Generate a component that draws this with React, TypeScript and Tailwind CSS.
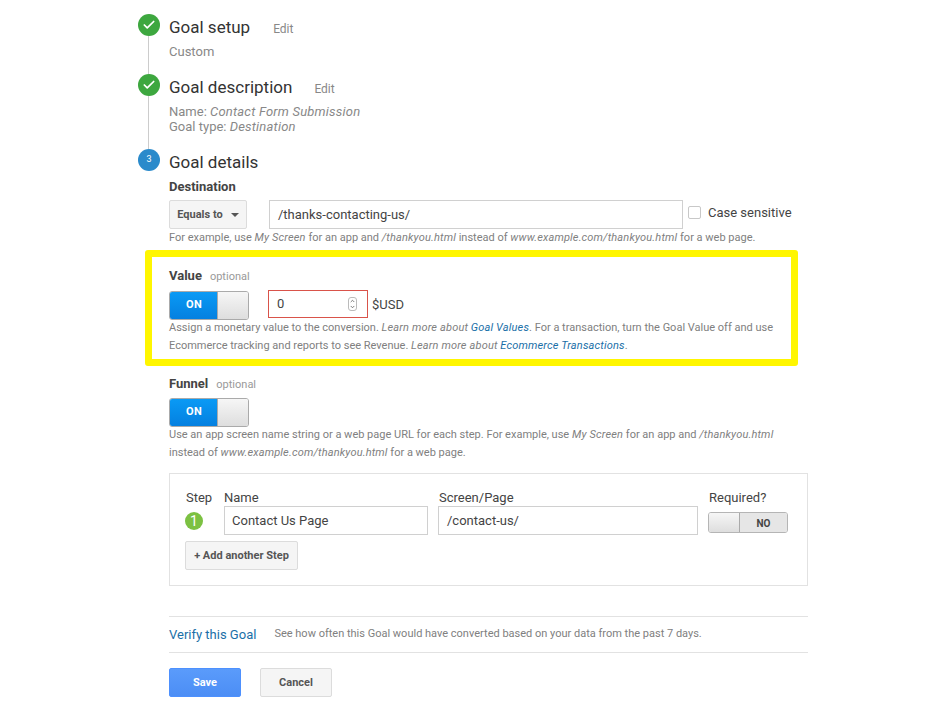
import { ChevronDown, ChevronUp, Check } from "lucide-react";

function StepMarker({ done, label, line }: { done?: boolean; label?: string; line: string }) {
  return (
    <div className="flex w-[31px] shrink-0 flex-col items-start">
      <div
        className={
          done
            ? "flex h-[22px] w-[22px] items-center justify-center rounded-full bg-[#3da73f] text-white"
            : "flex h-[22px] w-[22px] items-center justify-center rounded-full bg-[#2a8acb] text-[9px] text-white"
        }
      >
        {done ? <Check size={14} strokeWidth={3} /> : label}
      </div>
      {line !== "" && <div className={"ml-[10px] w-px bg-[#cccccc] " + line} />}
    </div>
  );
}

function Toggle() {
  return (
    <div className="flex h-[29px] w-[80px] overflow-hidden rounded-[3px] border border-[#aaaaaa]">
      <div className="flex w-[47px] items-center justify-center bg-gradient-to-b from-[#0a9af5] to-[#0580e0] pl-px text-[11px] font-bold tracking-wide text-white">
        ON
      </div>
      <div className="flex-1 border-l border-[#aaaaaa] bg-gradient-to-b from-[#f6f6f6] to-[#dedede]" />
    </div>
  );
}

function Help({ children, className = "" }: { children: React.ReactNode; className?: string }) {
  return <p className={"text-[11px] text-[#808080] " + className}>{children}</p>;
}

function Em({ children }: { children: React.ReactNode }) {
  return <i className="tracking-[0.16px]">{children}</i>;
}

function Heading({ title, optional }: { title: string; optional?: boolean }) {
  return (
    <div className="flex items-baseline gap-[8px] leading-[16px]">
      <span className="text-[13px] font-bold text-[#444444]">{title}</span>
      {optional && <span className="text-[11px] text-[#999999]">optional</span>}
    </div>
  );
}

const link = "italic tracking-[0.16px] text-[#1a6fa8]";

export default function App() {
  return (
    <div
      className="h-[706px] w-[950px] overflow-hidden bg-white pl-[138px] pt-[14px] text-[#333333]"
      style={{ fontFamily: "Roboto, sans-serif" }}
    >
      {/* step 1 */}
      <div className="flex h-[60px]">
        <StepMarker done line="h-[38px]" />
        <div>
          <div className="flex items-baseline">
            <span className="text-[17px] leading-[27px] text-[#333333]">Goal setup</span>
            <span className="ml-[23px] text-[12px] text-[#888888]">Edit</span>
          </div>
          <p className="mt-[3px] text-[13px] leading-[16px] text-[#888888]">Custom</p>
        </div>
      </div>

      {/* step 2 */}
      <div className="flex h-[75px]">
        <StepMarker done line="h-[53px]" />
        <div>
          <div className="flex items-baseline">
            <span className="text-[17px] leading-[27px] text-[#333333]">Goal description</span>
            <span className="ml-[22px] text-[12px] text-[#888888]">Edit</span>
          </div>
          <p className="mt-[3px] text-[13px] leading-[15px] text-[#888888]">
            Name: <i className="tracking-[0.2px]">Contact Form Submission</i>
          </p>
          <p className="text-[13px] leading-[15px] text-[#888888]">
            Goal type: <i className="tracking-[0.2px]">Destination</i>
          </p>
        </div>
      </div>

      {/* step 3 */}
      <div className="flex">
        <StepMarker label="3" line="" />
        <div className="w-[639px] shrink-0">
          <div className="text-[17px] leading-[27px] text-[#333333]">Goal details</div>

          <div className="mt-[3px]">
            <Heading title="Destination" />
          </div>
          <div className="mt-[5px] flex items-center">
            <div className="flex h-[29px] w-[78px] items-center justify-center gap-[8px] rounded-[2px] border border-[#dcdcdc] bg-[#f5f5f5] pt-px text-[11px] font-bold text-[#555555]">
              Equals to
              <span className="h-0 w-0 border-x-[4px] border-t-[4px] border-x-transparent border-t-[#555555]" />
            </div>
            <div className="ml-[22px] flex h-[29px] w-[414px] items-center border border-[#d0d0d0] pl-[8px] text-[13px] text-[#444444]">
              /thanks-contacting-us/
            </div>
            <div className="mb-[4px] ml-[5px] h-[13px] w-[13px] rounded-[2px] border border-[#c8c8c8]" />
            <span className="mb-[4px] ml-[7px] text-[13px] text-[#444444]">Case sensitive</span>
          </div>
          <Help className="mt-[1px] leading-[16px]">
            For example, use <Em>My Screen</Em> for an app and <Em>/thankyou.html</Em> instead of{" "}
            <Em>www.example.com/thankyou.html</Em> for a web page.
          </Help>

          {/* highlighted value section */}
          <div className="-ml-[24px] mt-[4px] h-[116px] w-[653px] rounded-[3px] border-[7px] border-[#fff600] pl-[17px] pt-[11px]">
            <Heading title="Value" optional />
            <div className="mt-[5px] flex items-center">
              <Toggle />
              <div className="mb-[2px] ml-[19px] flex h-[28px] w-[100px] items-center justify-between border border-[#d9534a] pl-[8px] pr-[10px] text-[13px] text-[#444444]">
                0
                <div className="flex h-[14px] w-[9px] flex-col items-center justify-center rounded-[3px] border border-[#bbbbbb] text-[#555555]">
                  <ChevronUp size={7} strokeWidth={3} />
                  <ChevronDown size={7} strokeWidth={3} />
                </div>
              </div>
              <span className="ml-[4px] text-[13px] text-[#444444]">$USD</span>
            </div>
            <Help className="-mt-px leading-[18px]">
              Assign a monetary value to the conversion. <Em>Learn more about</Em>{" "}
              <span className={link}>Goal Values</span>. For a transaction, turn the Goal Value off and use
              <br />
              Ecommerce tracking and reports to see Revenue. <Em>Learn more about</Em>{" "}
              <span className={link}>Ecommerce Transactions</span>.
            </Help>
          </div>

          {/* funnel */}
          <div className="mt-[10px]">
            <Heading title="Funnel" optional />
          </div>
          <div className="mt-[5px]">
            <Toggle />
          </div>
          <Help className="-mt-px leading-[18px]">
            Use an app screen name string or a web page URL for each step. For example, use <Em>My Screen</Em> for an
            app and <Em>/thankyou.html</Em>
            <br />
            instead of <Em>www.example.com/thankyou.html</Em> for a web page.
          </Help>

          <div className="mt-[11px] h-[113px] w-[639px] border border-[#e2e2e2] pl-[15px] pt-[14px]">
            <div className="flex">
              <div className="w-[39px]">
                <div className="pl-px pt-px text-[13px] leading-[17px] text-[#444444]">Step</div>
                <div className="mt-[6px] flex h-[18px] w-[18px] items-center justify-center rounded-full bg-[#7cc142] text-[14px] text-white">
                  1
                </div>
              </div>
              <div className="w-[204px]">
                <div className="pt-px text-[13px] leading-[17px] text-[#444444]">Name</div>
                <div className="flex h-[29px] items-center border border-[#d0d0d0] pl-[7px] text-[13px] text-[#444444]">
                  Contact Us Page
                </div>
              </div>
              <div className="ml-[10px] w-[260px]">
                <div className="pl-px pt-px text-[13px] leading-[17px] text-[#444444]">Screen/Page</div>
                <div className="flex h-[29px] items-center border border-[#d0d0d0] pl-[8px] text-[13px] text-[#444444]">
                  /contact-us/
                </div>
              </div>
              <div className="ml-[10px]">
                <div className="pl-px pt-px text-[13px] leading-[17px] text-[#444444]">Required?</div>
                <div className="mt-[6px] flex h-[21px] w-[80px] overflow-hidden rounded-[3px] border border-[#b5b5b5]">
                  <div className="w-[31px] border-r border-[#aaaaaa] bg-gradient-to-b from-[#f6f6f6] to-[#dedede]" />
                  <div className="flex flex-1 items-center justify-center bg-[#e6e6e6] pt-px text-[10px] font-bold text-[#444444]">
                    NO
                  </div>
                </div>
              </div>
            </div>
            <div className="mt-[6px] flex h-[29px] w-[113px] items-center justify-center rounded-[2px] border border-[#dcdcdc] bg-[#f5f5f5] pt-px text-[11px] font-bold text-[#555555]">
              + Add another Step
            </div>
          </div>

          <div className="mt-[30px] flex h-[37px] items-center border-y border-[#e2e2e2]">
            <span className="text-[13px] text-[#1a6fa8]">Verify this Goal</span>
            <span className="ml-[18px] text-[11px] text-[#808080]">
              See how often this Goal would have converted based on your data from the past 7 days.
            </span>
          </div>

          <div className="mt-[15px] flex gap-[19px]">
            <div className="flex h-[29px] w-[72px] items-center justify-center rounded-[2px] border border-[#4d90fe] bg-gradient-to-b from-[#5a9bfb] to-[#4c8ef5] pt-px text-[11px] font-bold text-white">
              Save
            </div>
            <div className="flex h-[29px] w-[72px] items-center justify-center rounded-[2px] border border-[#dcdcdc] bg-[#f5f5f5] pt-px text-[11px] font-bold text-[#555555]">
              Cancel
            </div>
          </div>
        </div>
      </div>
    </div>
  );
}
